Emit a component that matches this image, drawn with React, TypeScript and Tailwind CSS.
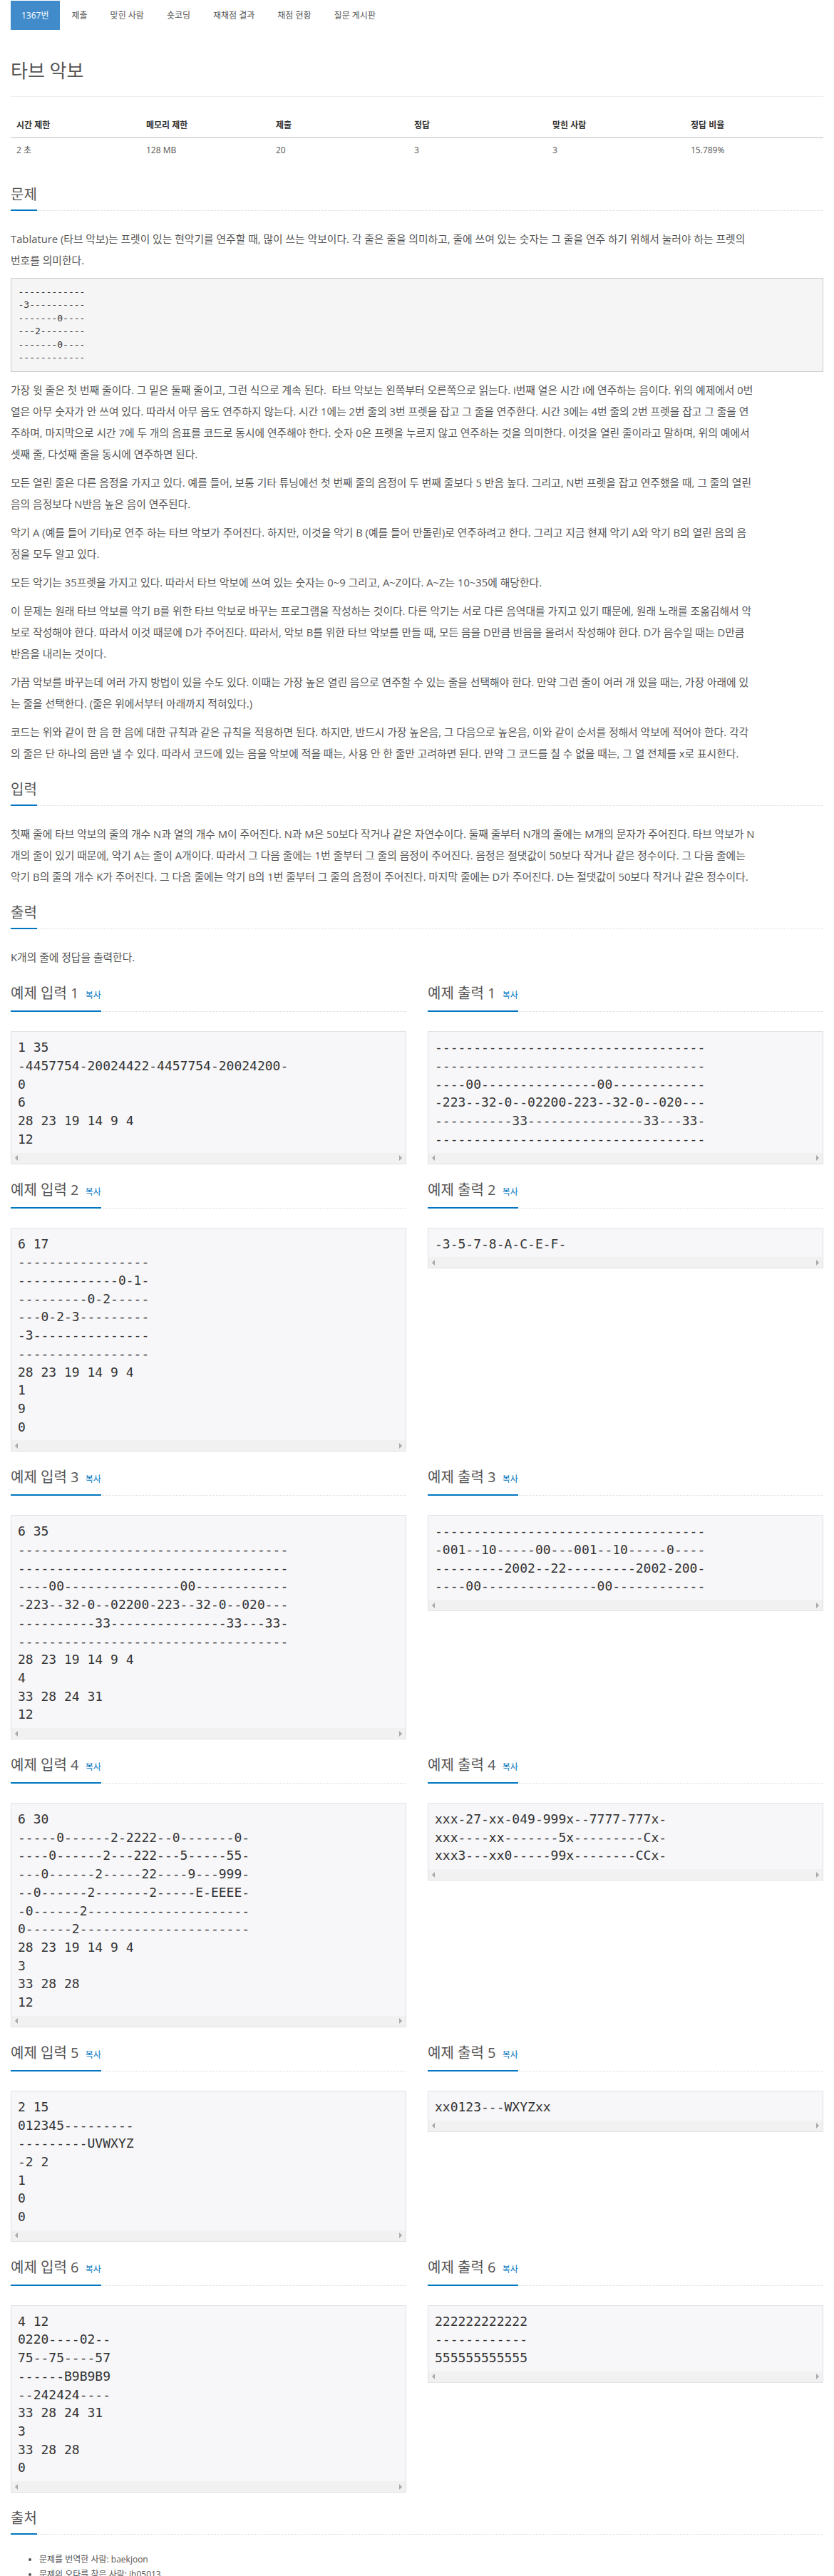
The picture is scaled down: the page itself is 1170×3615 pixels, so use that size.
import { Fragment, ReactNode } from 'react'

const tabs = ['1367번', '제출', '맞힌 사람', '숏코딩', '재채점 결과', '채점 현황', '질문 게시판']

const stats = [
  ['시간 제한', '2 초'],
  ['메모리 제한', '128 MB'],
  ['제출', '20'],
  ['정답', '3'],
  ['맞힌 사람', '3'],
  ['정답 비율', '15.789%'],
]

const tabExample = ['------------', '-3----------', '-------0----', '---2--------', '-------0----', '------------']

const paragraphs = [
  [
    '가장 윗 줄은 첫 번째 줄이다. 그 밑은 둘째 줄이고, 그런 식으로 계속 된다.\u00a0 타브 악보는 왼쪽부터 오른쪽으로 읽는다. i번째 열은 시간 i에 연주하는 음이다. 위의 예제에서 0번',
    '열은 아무 숫자가 안 쓰여 있다. 따라서 아무 음도 연주하지 않는다. 시간 1에는 2번 줄의 3번 프렛을 잡고 그 줄을 연주한다. 시간 3에는 4번 줄의 2번 프렛을 잡고 그 줄을 연',
    '주하며, 마지막으로 시간 7에 두 개의 음표를 코드로 동시에 연주해야 한다. 숫자 0은 프렛을 누르지 않고 연주하는 것을 의미한다. 이것을 열린 줄이라고 말하며, 위의 예에서',
    '셋째 줄, 다섯째 줄을 동시에 연주하면 된다.',
  ],
  [
    '모든 열린 줄은 다른 음정을 가지고 있다. 예를 들어, 보통 기타 튜닝에선 첫 번째 줄의 음정이 두 번째 줄보다 5 반음 높다. 그리고, N번 프렛을 잡고 연주했을 때, 그 줄의 열린',
    '음의 음정보다 N반음 높은 음이 연주된다.',
  ],
  [
    '악기 A (예를 들어 기타)로 연주 하는 타브 악보가 주어진다. 하지만, 이것을 악기 B (예를 들어 만돌린)로 연주하려고 한다. 그리고 지금 현재 악기 A와 악기 B의 열린 음의 음',
    '정을 모두 알고 있다.',
  ],
  ['모든 악기는 35프렛을 가지고 있다. 따라서 타브 악보에 쓰여 있는 숫자는 0~9 그리고, A~Z이다. A~Z는 10~35에 해당한다.'],
  [
    '이 문제는 원래 타브 악보를 악기 B를 위한 타브 악보로 바꾸는 프로그램을 작성하는 것이다. 다른 악기는 서로 다른 음역대를 가지고 있기 때문에, 원래 노래를 조옮김해서 악',
    '보로 작성해야 한다. 따라서 이것 때문에 D가 주어진다. 따라서, 악보 B를 위한 타브 악보를 만들 때, 모든 음을 D만큼 반음을 올려서 작성해야 한다. D가 음수일 때는 D만큼',
    '반음을 내리는 것이다.',
  ],
  [
    '가끔 악보를 바꾸는데 여러 가지 방법이 있을 수도 있다. 이때는 가장 높은 열린 음으로 연주할 수 있는 줄을 선택해야 한다. 만약 그런 줄이 여러 개 있을 때는, 가장 아래에 있',
    '는 줄을 선택한다. (줄은 위에서부터 아래까지 적혀있다.)',
  ],
  [
    '코드는 위와 같이 한 음 한 음에 대한 규칙과 같은 규칙을 적용하면 된다. 하지만, 반드시 가장 높은음, 그 다음으로 높은음, 이와 같이 순서를 정해서 악보에 적어야 한다. 각각',
    '의 줄은 단 하나의 음만 낼 수 있다. 따라서 코드에 있는 음을 악보에 적을 때는, 사용 안 한 줄만 고려하면 된다. 만약 그 코드를 칠 수 없을 때는, 그 열 전체를 x로 표시한다.',
  ],
]

const inputText = [
  '첫째 줄에 타브 악보의 줄의 개수 N과 열의 개수 M이 주어진다. N과 M은 50보다 작거나 같은 자연수이다. 둘째 줄부터 N개의 줄에는 M개의 문자가 주어진다. 타브 악보가 N',
  '개의 줄이 있기 때문에, 악기 A는 줄이 A개이다. 따라서 그 다음 줄에는 1번 줄부터 그 줄의 음정이 주어진다. 음정은 절댓값이 50보다 작거나 같은 정수이다. 그 다음 줄에는',
  '악기 B의 줄의 개수 K가 주어진다. 그 다음 줄에는 악기 B의 1번 줄부터 그 줄의 음정이 주어진다. 마지막 줄에는 D가 주어진다. D는 절댓값이 50보다 작거나 같은 정수이다.',
]

const dash35 = '-----------------------------------'
const tab35 = [
  dash35,
  dash35,
  '----00---------------00------------',
  '-223--32-0--02200-223--32-0--020---',
  '----------33---------------33---33-',
  dash35,
]

const samples = [
  {
    input: ['1 35', '-4457754-20024422-4457754-20024200-', '0', '6', '28 23 19 14 9 4', '12'],
    output: tab35,
  },
  {
    input: [
      '6 17',
      '-----------------',
      '-------------0-1-',
      '---------0-2-----',
      '---0-2-3---------',
      '-3---------------',
      '-----------------',
      '28 23 19 14 9 4',
      '1',
      '9',
      '0',
    ],
    output: ['-3-5-7-8-A-C-E-F-'],
  },
  {
    input: ['6 35', ...tab35, '28 23 19 14 9 4', '4', '33 28 24 31', '12'],
    output: [
      dash35,
      '-001--10-----00---001--10-----0----',
      '---------2002--22---------2002-200-',
      '----00---------------00------------',
    ],
  },
  {
    input: [
      '6 30',
      '-----0------2-2222--0-------0-',
      '----0------2---222---5-----55-',
      '---0------2-----22----9---999-',
      '--0------2-------2-----E-EEEE-',
      '-0------2---------------------',
      '0------2----------------------',
      '28 23 19 14 9 4',
      '3',
      '33 28 28',
      '12',
    ],
    output: ['xxx-27-xx-049-999x--7777-777x-', 'xxx----xx-------5x---------Cx-', 'xxx3---xx0-----99x--------CCx-'],
  },
  {
    input: ['2 15', '012345---------', '---------UVWXYZ', '-2 2', '1', '0', '0'],
    output: ['xx0123---WXYZxx'],
  },
  {
    input: ['4 12', '0220----02--', '75--75----57', '------B9B9B9', '--242424----', '33 28 24 31', '3', '33 28 28', '0'],
    output: ['222222222222', '------------', '555555555555'],
  },
]

function Headline({ children, sample = false }: { children: ReactNode; sample?: boolean }) {
  return (
    <div
      className={
        sample
          ? 'mt-[12px] mb-[27px] flex border-b border-dotted border-[#dcdcdc]'
          : 'mt-[12px] mb-[24px] flex border-b border-dotted border-[#dcdcdc]'
      }
    >
      <h2 className="-mb-px border-b-2 border-[#0076c0] pb-[7px] text-[20px] leading-[28px] text-[#555]">
        {children}
      </h2>
    </div>
  )
}

function Para({ lines }: { lines: string[] }) {
  return (
    <p className="mb-[10px] text-[14.8px] leading-[30px]">
      {lines.map((line, i) => (
        <Fragment key={i}>
          {i > 0 && <br />}
          {line}
        </Fragment>
      ))}
    </p>
  )
}

function ScrollTrack() {
  return (
    <div className="flex h-[15px] items-center justify-between bg-[#f1f1f1] px-[5px]">
      <span className="h-0 w-0 border-y-[4px] border-r-[4px] border-y-transparent border-r-[#a8a8a8]" />
      <span className="h-0 w-0 border-y-[4px] border-l-[4px] border-y-transparent border-l-[#a8a8a8]" />
    </div>
  )
}

function SampleBlock({ title, lines }: { title: string; lines: string[] }) {
  return (
    <div className="mb-[10px] flex flex-col">
      <Headline sample>
        {title}{' '}
        <a className="ml-[4px] text-[12px] text-[#0076c0]">복사</a>
      </Headline>
      <div className="border border-[#e1e1e8] bg-[#f7f7f9]">
        <pre className="px-[9px] pt-[9px] pb-[6px] font-['DejaVu_Sans_Mono',monospace] text-[18px] leading-[25.71px] text-[#333]">
          {lines.join('\n')}
        </pre>
        <ScrollTrack />
      </div>
    </div>
  )
}

export default function App() {
  return (
    <div className="flex w-[1170px] flex-col bg-white px-[15px] font-['Open_Sans','Noto_Sans_CJK_KR',sans-serif] text-[#555]">
      <ul className="flex gap-[2px] pt-px">
        {tabs.map((tab, i) => (
          <li
            key={tab}
            className={
              i === 0
                ? 'flex h-[41px] items-center bg-[#428bca] px-[15px] text-[12px] text-white'
                : 'flex h-[41px] items-center px-[15px] text-[12px] text-[#555]'
            }
          >
            {tab}
          </li>
        ))}
      </ul>

      <div className="mt-[43px] border-b border-[#eee] pb-[21px]">
        <h1 className="text-[26px] leading-[29px] text-[#555]">타브 악보</h1>
      </div>

      <div className="mt-[23px] mb-[20px] grid grid-cols-[182px_182px_194px_194px_194px_1fr] text-[12px] leading-[17px]">
        {stats.map(([label]) => (
          <div key={label} className="border-b-2 border-[#ddd] p-[8px] font-bold text-[#333]">
            {label}
          </div>
        ))}
        {stats.map(([label, value]) => (
          <div key={label} className="p-[8px] text-[#555]">
            {value}
          </div>
        ))}
      </div>

      <Headline>문제</Headline>
      <Para
        lines={[
          'Tablature (타브 악보)는 프렛이 있는 현악기를 연주할 때, 많이 쓰는 악보이다. 각 줄은 줄을 의미하고, 줄에 쓰여 있는 숫자는 그 줄을 연주 하기 위해서 눌러야 하는 프렛의',
          '번호를 의미한다.',
        ]}
      />
      <pre className="mb-[10px] border border-[#ccc] bg-[#f5f5f5] p-[9.5px] font-['DejaVu_Sans_Mono',monospace] text-[13px] leading-[18.57px] text-[#333]">
        {tabExample.join('\n')}
      </pre>
      {paragraphs.map((lines, i) => (
        <Para key={i} lines={lines} />
      ))}

      <Headline>입력</Headline>
      <Para lines={inputText} />

      <Headline>출력</Headline>
      <Para lines={['K개의 줄에 정답을 출력한다.']} />

      {samples.map((s, i) => (
        <div key={i} className="grid grid-cols-2 gap-x-[30px]">
          <SampleBlock title={`예제 입력 ${i + 1}`} lines={s.input} />
          <SampleBlock title={`예제 출력 ${i + 1}`} lines={s.output} />
        </div>
      ))}

      <Headline>출처</Headline>
      <ul className="mb-[10px] list-disc pl-[40px] text-[12px] leading-[21px] text-[#555]">
        <li>문제를 번역한 사람: baekjoon</li>
        <li>문제의 오타를 찾은 사람: jh05013</li>
      </ul>
    </div>
  )
}
